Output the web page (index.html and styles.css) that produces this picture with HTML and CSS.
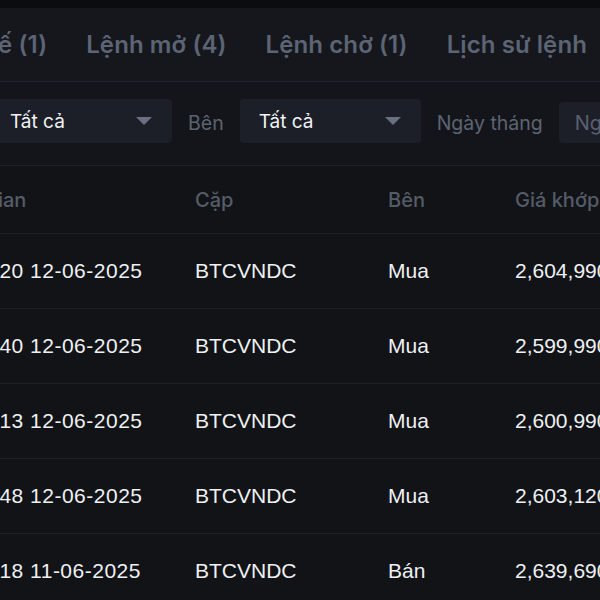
FILE: index.html
```html
<!DOCTYPE html>
<html lang="vi">
<head>
    <meta charset="UTF-8">
    <meta name="viewport" content="width=device-width, initial-scale=1.0">
    <title>Lịch sử lệnh</title>
    <link rel="stylesheet" href="styles.css">
</head>
<body>
    <div class="screen">
        <div class="topbar"></div>

        <div class="tabs">
            <div class="tab">Vị thế (1)</div>
            <div class="tab">Lệnh mở (4)</div>
            <div class="tab">Lệnh chờ (1)</div>
            <div class="tab">Lịch sử lệnh</div>
        </div>

        <div class="filters">
            <div class="select first">
                <span>Tất cả</span>
                <span class="caret"></span>
            </div>
            <div class="label">Bên</div>
            <div class="select">
                <span>Tất cả</span>
                <span class="caret"></span>
            </div>
            <div class="label">Ngày tháng</div>
            <div class="date">Ngày bắt đầu</div>
        </div>

        <div class="table">
            <div class="row head">
                <div class="c1">Thời gian</div>
                <div class="c2">Cặp</div>
                <div class="c3">Bên</div>
                <div class="c4">Giá khớp</div>
            </div>
            <div class="row">
                <div class="c1">14:32:20 12-06-2025</div>
                <div class="c2">BTCVNDC</div>
                <div class="c3">Mua</div>
                <div class="c4">2,604,990,000</div>
            </div>
            <div class="row">
                <div class="c1">14:31:40 12-06-2025</div>
                <div class="c2">BTCVNDC</div>
                <div class="c3">Mua</div>
                <div class="c4">2,599,990,000</div>
            </div>
            <div class="row">
                <div class="c1">14:30:13 12-06-2025</div>
                <div class="c2">BTCVNDC</div>
                <div class="c3">Mua</div>
                <div class="c4">2,600,990,000</div>
            </div>
            <div class="row">
                <div class="c1">09:12:48 12-06-2025</div>
                <div class="c2">BTCVNDC</div>
                <div class="c3">Mua</div>
                <div class="c4">2,603,120,000</div>
            </div>
            <div class="row">
                <div class="c1">21:05:18 11-06-2025</div>
                <div class="c2">BTCVNDC</div>
                <div class="c3">Bán</div>
                <div class="c4">2,639,690,000</div>
            </div>
        </div>
    </div>
</body>
</html>
```

FILE: styles.css
```css
body {
    margin: 0;
    background-color: #111317;
    font-family: Inter, "Noto Sans", sans-serif;
}
.screen {
    width: 600px;
    height: 600px;
    overflow: hidden;
}
.topbar {
    height: 8px;
    background-color: #0b0c0f;
}
.tabs {
    height: 73px;
    background-color: #15171c;
    border-bottom: 1px solid #1f2430;
    display: flex;
    align-items: center;
    justify-content: flex-end;
    gap: 39px;
    padding-right: 13px;
}
.tab {
    flex-shrink: 0;
    white-space: nowrap;
    font-size: 24px;
    font-weight: 600;
    color: #5c6475;
    letter-spacing: 0.1px;
}
.filters {
    height: 66px;
    padding-top: 17px;
    background-color: #13151a;
    border-bottom: 1px solid #1c2029;
    display: flex;
    align-items: flex-start;
    gap: 16px;
}
.select {
    flex-shrink: 0;
    width: 181px;
    height: 44px;
    box-sizing: border-box;
    padding: 0 20px 0 19px;
    background-color: #1c1f27;
    border-radius: 4px;
    display: flex;
    align-items: center;
    justify-content: space-between;
    font-size: 19px;
    color: #f1f2f4;
}
.select.first {
    margin-left: -9px;
}
.caret {
    width: 0;
    height: 0;
    border-left: 8px solid transparent;
    border-right: 8px solid transparent;
    border-top: 8px solid #6b7080;
}
.label {
    flex-shrink: 0;
    line-height: 48px;
    font-size: 19.5px;
    color: #5d6471;
}
.date {
    flex-shrink: 0;
    width: 180px;
    height: 41px;
    margin-top: 3px;
    box-sizing: border-box;
    padding-left: 16px;
    background-color: #1c1f27;
    border-radius: 4px;
    display: flex;
    align-items: center;
    font-size: 20px;
    color: #5b6170;
    white-space: nowrap;
}
.table {
    margin-left: -62px;
}
.row {
    display: grid;
    grid-template-columns: 257px 193px 127px 200px;
    height: 74px;
    border-bottom: 1px solid #1c2029;
    align-items: center;
    font-family: "Liberation Sans", Arial, sans-serif;
    font-size: 21px;
    color: #eef0f3;
    white-space: nowrap;
}
.row .c1 {
    letter-spacing: 0.5px;
}
.row.head {
    height: 67px;
    font-family: Inter, "Noto Sans", sans-serif;
    font-weight: 500;
    font-size: 20px;
    color: #555c68;
}
.row.head .c1 {
    letter-spacing: 0;
}
```
